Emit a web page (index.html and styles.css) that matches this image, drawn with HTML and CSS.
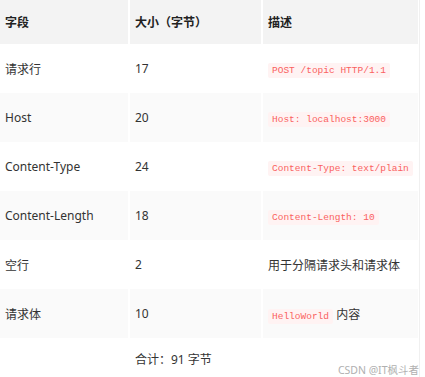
FILE: index.html
```html
<!DOCTYPE html>
<html lang="zh">
<head>
    <meta charset="UTF-8">
    <meta name="viewport" content="width=device-width, initial-scale=1.0">
    <title>HTTP 请求结构</title>
    <link rel="stylesheet" href="styles.css">
</head>
<body>
    <div class="wrap">
        <table class="req-table">
            <thead>
                <tr>
                    <th class="c1">字段</th>
                    <th class="c2">大小（字节）</th>
                    <th class="c3">描述</th>
                </tr>
            </thead>
            <tbody>
                <tr>
                    <td>请求行</td>
                    <td>17</td>
                    <td><code>POST /topic HTTP/1.1</code></td>
                </tr>
                <tr>
                    <td>Host</td>
                    <td>20</td>
                    <td><code>Host: localhost:3000</code></td>
                </tr>
                <tr>
                    <td>Content-Type</td>
                    <td>24</td>
                    <td><code>Content-Type: text/plain</code></td>
                </tr>
                <tr>
                    <td>Content-Length</td>
                    <td>18</td>
                    <td><code>Content-Length: 10</code></td>
                </tr>
                <tr>
                    <td>空行</td>
                    <td>2</td>
                    <td>用于分隔请求头和请求体</td>
                </tr>
                <tr>
                    <td>请求体</td>
                    <td>10</td>
                    <td><code>HelloWorld</code> 内容</td>
                </tr>
                <tr class="total">
                    <td></td>
                    <td>合计：91 字节</td>
                    <td></td>
                </tr>
            </tbody>
        </table>
        <div class="watermark">CSDN @IT枫斗者</div>
    </div>
</body>
</html>
```

FILE: styles.css
```css
body {
    margin: 0;
    background: #fff;
    font-family: "Noto Sans", "Noto Sans CJK SC", sans-serif;
    font-size: 12px;
    color: #333;
}
.wrap {
    position: relative;
    width: 419px;
    height: 377px;
    border-right: 1px solid #f0f0f0;
    overflow: hidden;
}
.req-table {
    border-collapse: separate;
    border-spacing: 2px 0;
    margin-left: -2px;
    width: 422px;
}
.req-table th {
    background: #f3f3f3;
    height: 44px;
    text-align: left;
    font-weight: bold;
    color: #222;
    padding: 0 5px;
}
.req-table td {
    height: 49px;
    padding: 0 5px;
}
.c1 {
    width: 118px;
}
.c2 {
    width: 121px;
}
.req-table tbody tr:nth-child(even) td {
    background: #fafafa;
}
.req-table tr.total td {
    background: #fff;
    height: 27px;
    vertical-align: top;
    padding-top: 12px;
}
code {
    font-family: "Liberation Mono", monospace;
    font-size: 9.5px;
    color: #fa6160;
    background: #fff3f3;
    padding: 2px 4px;
    border-radius: 2px;
}
.watermark {
    position: absolute;
    right: 0;
    bottom: 0;
    font-size: 10.5px;
    color: #b0b0b0;
    background: rgba(255, 255, 255, 0.6);
}
```
